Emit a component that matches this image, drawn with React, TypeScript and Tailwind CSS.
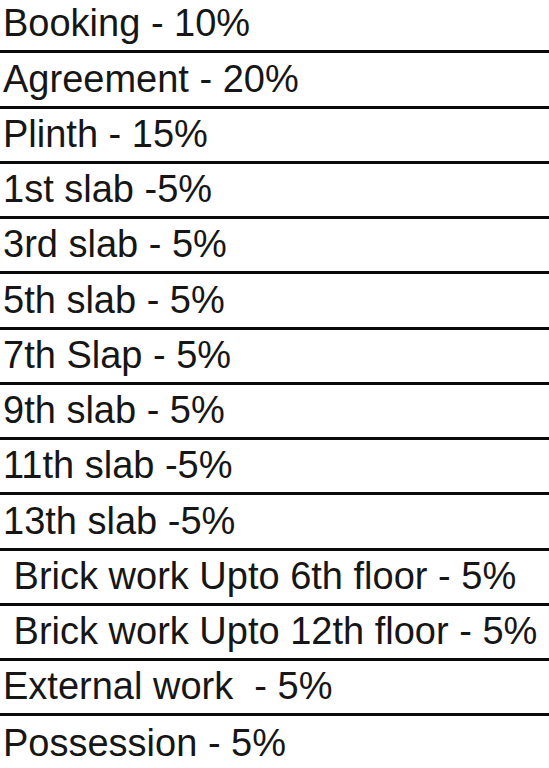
import React from 'react';

const stages = [
  'Booking - 10%',
  'Agreement - 20%',
  'Plinth - 15%',
  '1st slab -5%',
  '3rd slab - 5%',
  '5th slab - 5%',
  '7th Slap - 5%',
  '9th slab - 5%',
  '11th slab -5%',
  '13th slab -5%',
  ' Brick work Upto 6th floor - 5%',
  ' Brick work Upto 12th floor - 5%',
  'External work  - 5%',
  'Possession - 5%',
];

const App: React.FC = () => {
  return (
    <div className="w-[549px] h-[768px] overflow-hidden bg-white font-['Liberation_Sans',Arial,sans-serif] text-[#161616]">
      <div className="-mt-[2px]">
        {stages.map((stage, idx) => (
          <div
            key={idx}
            className={
              idx === stages.length - 1
                ? 'h-[55.25px] flex items-center pl-[3px] pb-[1.5px] text-[38px] leading-none whitespace-pre'
                : 'h-[55.25px] flex items-center pl-[3px] pb-[1.5px] text-[38px] leading-none whitespace-pre border-b-[3px] border-[#0a0a0a]'
            }
          >
            {stage}
          </div>
        ))}
      </div>
    </div>
  );
};

export default App;
